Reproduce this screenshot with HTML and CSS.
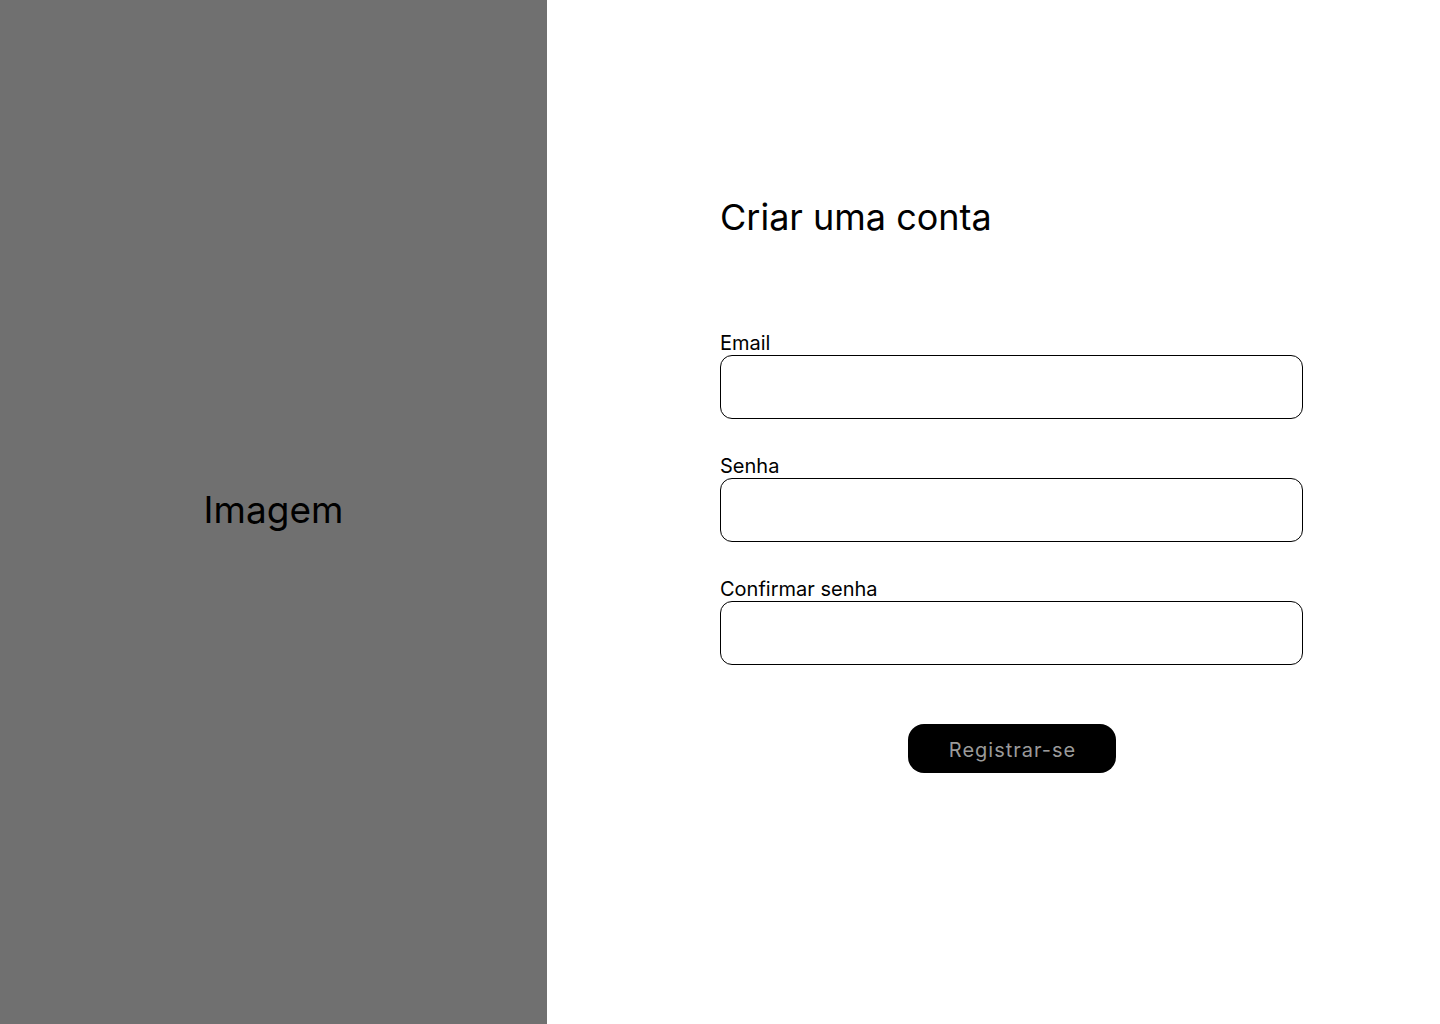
FILE: index.html
```html
<!DOCTYPE html>
<html lang="pt">
<head>
<meta charset="utf-8">
<title>Criar uma conta</title>
<link rel="stylesheet" href="styles.css">
</head>
<body>
<div class="page">
  <aside class="image-panel">
    <span class="image-label">Imagem</span>
  </aside>
  <main class="form-panel">
    <form class="signup">
      <h1 class="title">Criar uma conta</h1>
      <div class="fields">
        <label class="field">
          <span class="field-label">Email</span>
          <input class="field-input" type="email">
        </label>
        <label class="field">
          <span class="field-label">Senha</span>
          <input class="field-input" type="password">
        </label>
        <label class="field">
          <span class="field-label">Confirmar senha</span>
          <input class="field-input" type="password">
        </label>
      </div>
      <div class="actions">
        <button class="submit" type="button">Registrar-se</button>
      </div>
    </form>
  </main>
</div>
</body>
</html>
```

FILE: styles.css
```css
* { box-sizing: border-box; }
html, body { margin: 0; padding: 0; }
body {
  font-family: Inter, "Noto Sans", sans-serif;
  color: #000;
  background: #fff;
}
.page {
  display: flex;
  width: 1440px;
  height: 1024px;
}
.image-panel {
  width: 547px;
  flex: none;
  background: #707070;
  display: flex;
  align-items: center;
  justify-content: center;
}
.image-label {
  font-size: 37px;
  line-height: 44px;
  margin-bottom: 4px;
}
.form-panel {
  flex: 1;
  padding: 195px 0 0 173px;
}
.signup {
  width: 583px;
  display: flex;
  flex-direction: column;
}
.title {
  margin: 0;
  font-size: 36px;
  font-weight: 400;
  line-height: 44px;
}
.fields {
  margin-top: 92px;
  display: flex;
  flex-direction: column;
  gap: 35px;
}
.field {
  display: flex;
  flex-direction: column;
}
.field-label {
  font-size: 20px;
  line-height: 24px;
}
.field-input {
  height: 64px;
  width: 100%;
  border: 1px solid #000;
  border-radius: 12px;
  background: #fff;
  font: inherit;
  padding: 0 16px;
  outline: none;
}
.actions {
  margin-top: 59px;
  display: flex;
  justify-content: center;
}
.submit {
  width: 208px;
  height: 49px;
  padding: 2px 0 0 2px;
  border: none;
  border-radius: 16px;
  background: #000;
  color: #9a9a9a;
  font-family: Inter, "Noto Sans", sans-serif;
  font-size: 20px;
  letter-spacing: 1px;
  cursor: pointer;
}
```
